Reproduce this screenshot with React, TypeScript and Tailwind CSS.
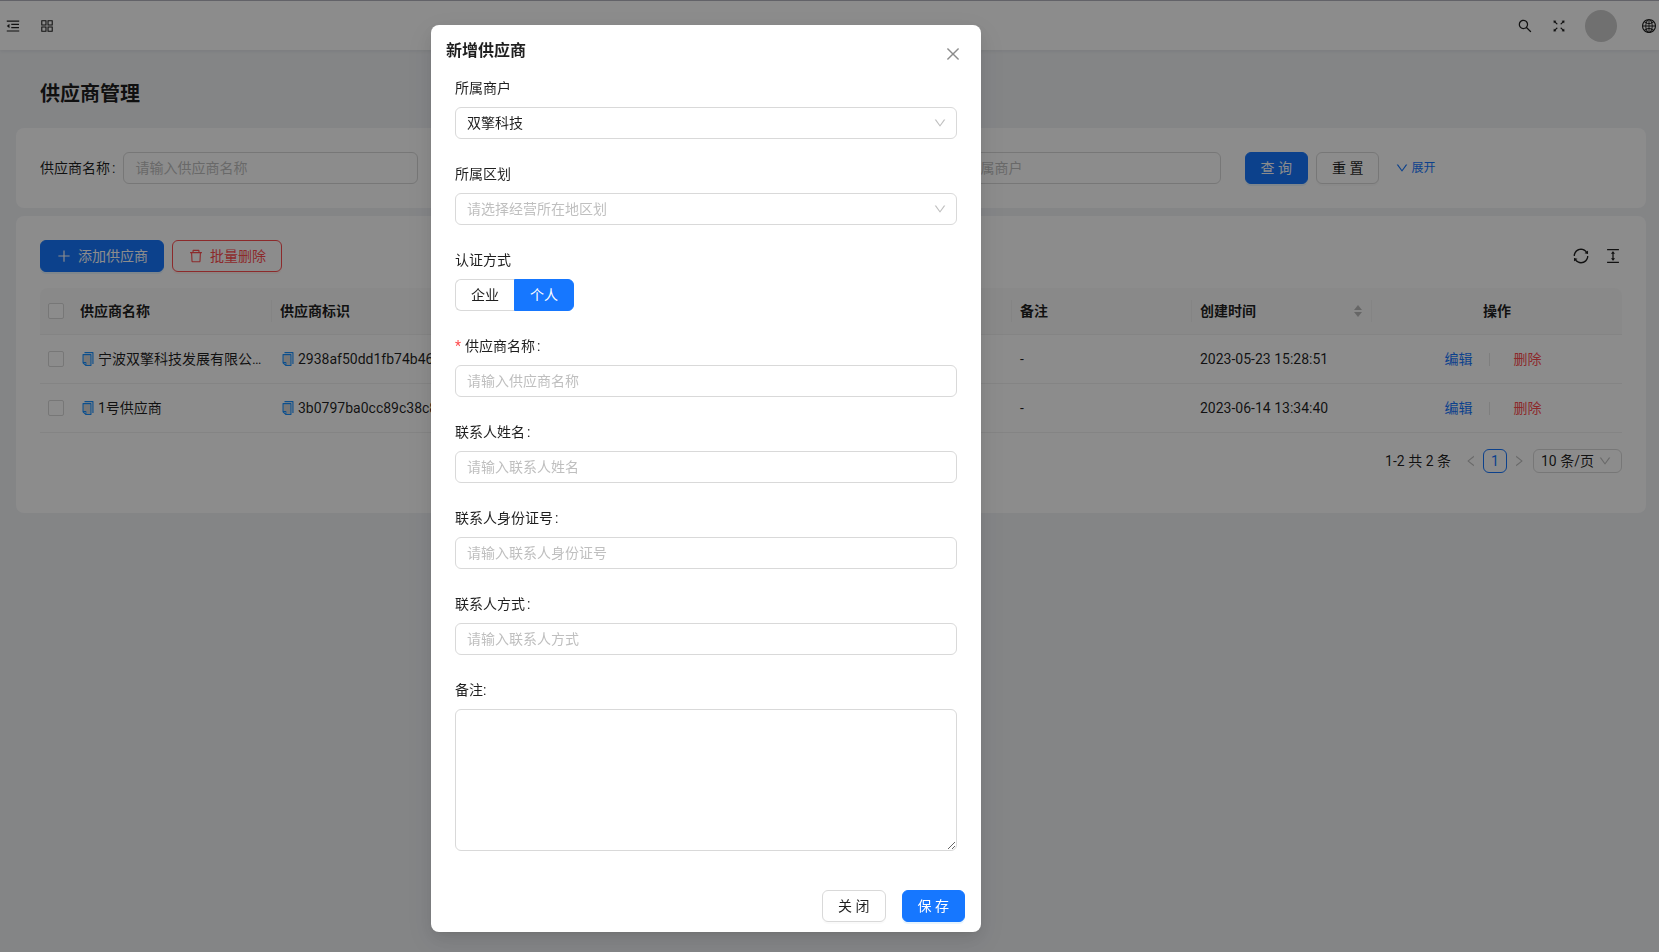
import type { ButtonHTMLAttributes, InputHTMLAttributes, ReactNode } from "react";
import {
  AiOutlineAppstore,
  AiOutlineClose,
  AiOutlineColumnHeight,
  AiOutlineDelete,
  AiOutlineDown,
  AiOutlineFullscreen,
  AiOutlineGlobal,
  AiOutlineLeft,
  AiOutlineMenuFold,
  AiOutlinePlus,
  AiOutlineRight,
  AiOutlineSearch,
  AiOutlineSync,
  AiTwotoneCopy,
} from "react-icons/ai";
import clsx from "clsx";

const suppliers = [
  { name: "宁波双擎科技发展有限公司", code: "2938af50dd1fb74b46f0c1", merchant: "双擎科技", auth: "企业", contact: "-", remark: "-", createdAt: "2023-05-23 15:28:51" },
  { name: "1号供应商", code: "3b0797ba0cc89c38c8d2a7", merchant: "双擎科技", auth: "个人", contact: "-", remark: "-", createdAt: "2023-06-14 13:34:40" },
];

const columns = [
  { title: "供应商名称", width: "w-[200px]" },
  { title: "供应商标识", width: "w-[200px]" },
  { title: "所属商户", width: "w-[180px]" },
  { title: "认证方式", width: "w-[180px]" },
  { title: "联系人", width: "w-[180px]" },
  { title: "备注", width: "w-[180px]" },
  { title: "创建时间", width: "w-[180px]", sortable: true },
];

const contactFields = [
  { id: "name", label: "供应商名称", placeholder: "请输入供应商名称", required: true },
  { id: "contact", label: "联系人姓名", placeholder: "请输入联系人姓名" },
  { id: "idCard", label: "联系人身份证号", placeholder: "请输入联系人身份证号" },
  { id: "phone", label: "联系人方式", placeholder: "请输入联系人方式" },
];

type ButtonProps = ButtonHTMLAttributes<HTMLButtonElement> & { kind?: "default" | "primary" | "danger" };

function Button({ kind = "default", className, children, ...rest }: ButtonProps) {
  return (
    <button
      type="button"
      className={clsx(
        "flex h-8 items-center justify-center gap-[6px] whitespace-nowrap rounded-md border px-[15px] text-sm",
        kind === "default" && "border-[#d9d9d9] bg-white text-black/88 shadow-[0_2px_0_rgba(0,0,0,0.02)]",
        kind === "primary" && "border-[#1677ff] bg-[#1677ff] text-white shadow-[0_2px_0_rgba(5,145,255,0.1)]",
        kind === "danger" && "border-[#ff4d4f] bg-white text-[#ff4d4f] shadow-[0_2px_0_rgba(255,38,5,0.06)]",
        className
      )}
      {...rest}
    >
      {children}
    </button>
  );
}

function Input({ className, ...rest }: InputHTMLAttributes<HTMLInputElement>) {
  return (
    <input
      className={clsx(
        "h-8 w-full min-w-0 rounded-md border border-[#d9d9d9] bg-white px-[11px] text-sm text-black/88 outline-none placeholder:text-[#bfbfbf] focus:border-[#1677ff]",
        className
      )}
      {...rest}
    />
  );
}

function Select({ id, placeholder, options }: { id: string; placeholder?: string; options: string[] }) {
  return (
    <div className="relative">
      <select
        id={id}
        defaultValue={placeholder ? "" : options[0]}
        className={clsx(
          "h-8 w-full appearance-none rounded-md border border-[#d9d9d9] bg-white px-[11px] text-sm outline-none",
          placeholder ? "text-[#bfbfbf]" : "text-black/88"
        )}
      >
        {placeholder && <option value="">{placeholder}</option>}
        {options.map((o) => (
          <option key={o}>{o}</option>
        ))}
      </select>
      <AiOutlineDown className="pointer-events-none absolute right-[10px] top-[9px] size-[14px] text-black/25" />
    </div>
  );
}

type FormItemProps = { htmlFor: string; label: string; required?: boolean; colon?: boolean; children: ReactNode };

function FormItem({ htmlFor, label, required, colon, children }: FormItemProps) {
  return (
    <div className="mb-6">
      <label htmlFor={htmlFor} className={clsx("block pb-2 leading-[22px]", colon && "after:ml-[2px] after:content-[':']")}>
        {required && <span className="mr-1 text-[#ff4d4f]">*</span>}
        {label}
      </label>
      {children}
    </div>
  );
}

function Filter({ id, label, placeholder }: { id: string; label: string; placeholder: string }) {
  return (
    <div className="flex items-center gap-2">
      <label htmlFor={id} className="shrink-0 after:ml-[2px] after:content-[':']">{label}</label>
      <Input id={id} placeholder={placeholder} />
    </div>
  );
}

function Header() {
  return (
    <header className="flex h-[50px] items-center justify-between border-t border-[#b3b3bd] bg-white pl-[5px] pr-[2px] shadow-[0_1px_4px_rgba(0,21,41,0.08)]">
      <div className="flex items-center gap-[18px]">
        <button type="button" aria-label="折叠菜单"><AiOutlineMenuFold className="size-4" /></button>
        <button type="button" aria-label="应用"><AiOutlineAppstore className="size-4" /></button>
      </div>
      <div className="flex items-center gap-[18px]">
        <button type="button" aria-label="搜索"><AiOutlineSearch className="size-4" /></button>
        <button type="button" aria-label="全屏"><AiOutlineFullscreen className="size-4" /></button>
        <span className="size-8 rounded-full bg-[#ccc]" />
        <button type="button" aria-label="语言" className="ml-[6px]"><AiOutlineGlobal className="size-4" /></button>
      </div>
    </header>
  );
}

function SupplierTable() {
  return (
    <table className="mt-4 w-full table-fixed border-separate border-spacing-0">
      <thead>
        <tr className="h-[47px]">
          <th className="w-8 rounded-tl-lg border-b border-[#f0f0f0] bg-[#fafafa] pl-2 text-left">
            <input type="checkbox" aria-label="全选" className="block size-4 appearance-none rounded-[2px] border border-[#d9d9d9] bg-white" />
          </th>
          {columns.map((col) => (
            <th key={col.title} className={clsx("border-b border-[#f0f0f0] bg-[#fafafa] text-left font-semibold", col.width)}>
              <div className="flex h-[22px] items-center justify-between border-r border-[#f0f0f0] px-2">
                {col.title}
                {col.sortable && (
                  <svg aria-hidden="true" viewBox="0 0 10 14" className="h-[14px] w-[10px] fill-black/25">
                    <path d="M5 1L9 6H1zM5 13L1 8H9z" />
                  </svg>
                )}
              </div>
            </th>
          ))}
          <th className="rounded-tr-lg border-b border-[#f0f0f0] bg-[#fafafa] text-center font-semibold">操作</th>
        </tr>
      </thead>
      <tbody>
        {suppliers.map((row) => (
          <tr key={row.code} className="h-[49px] [&>td]:border-b [&>td]:border-[#f0f0f0] [&>td]:px-2">
            <td>
              <input type="checkbox" aria-label={row.name} className="block size-4 appearance-none rounded-[2px] border border-[#d9d9d9] bg-white" />
            </td>
            {[row.name, row.code].map((text) => (
              <td key={text}>
                <div className="flex items-center gap-[2px]">
                  <button type="button" aria-label="复制" className="shrink-0"><AiTwotoneCopy className="size-4 text-[#1890ff]" /></button>
                  <span className="truncate">{text}</span>
                </div>
              </td>
            ))}
            <td>{row.merchant}</td>
            <td>{row.auth}</td>
            <td>{row.contact}</td>
            <td>{row.remark}</td>
            <td>{row.createdAt}</td>
            <td>
              <div className="flex items-center justify-center">
                <a href="#edit" className="px-4 text-[#1677ff]">编辑</a>
                <span className="h-[13px] w-px bg-[#e6e6e6]" />
                <a href="#delete" className="px-6 text-[#ff4d4f]">删除</a>
              </div>
            </td>
          </tr>
        ))}
      </tbody>
    </table>
  );
}

function Pagination() {
  return (
    <nav className="mt-4 flex items-center justify-end" aria-label="分页">
      <span className="mr-2">1-2 共 2 条</span>
      <button type="button" aria-label="上一页" className="flex size-6 items-center justify-center text-black/25"><AiOutlineLeft className="size-[14px]" /></button>
      <button type="button" className="flex size-6 items-center justify-center rounded-md border border-[#1677ff] text-[#1677ff]">1</button>
      <button type="button" aria-label="下一页" className="flex size-6 items-center justify-center text-black/25"><AiOutlineRight className="size-[14px]" /></button>
      <div className="relative ml-[2px]">
        <select aria-label="每页条数" className="block h-6 w-[89px] appearance-none rounded-md border border-[#d9d9d9] bg-white px-[7px] text-sm">
          <option>10 条/页</option>
        </select>
        <AiOutlineDown className="pointer-events-none absolute right-[10px] top-[5px] size-[14px] text-black/25" />
      </div>
    </nav>
  );
}

function SupplierModal() {
  return (
    <div className="fixed inset-0 flex items-start justify-center overflow-hidden bg-black/45 pr-[247px] pt-[25px]">
      <form
        role="dialog"
        aria-labelledby="modal-title"
        className="w-[550px] rounded-lg bg-white pb-[10px] shadow-[0_6px_16px_0_rgba(0,0,0,0.08),0_3px_6px_-4px_rgba(0,0,0,0.12),0_9px_28px_8px_rgba(0,0,0,0.05)]"
      >
        <div className="flex items-end justify-between py-[14px] pl-[15px] pr-[19px]">
          <h2 id="modal-title" className="text-base font-semibold leading-6">新增供应商</h2>
          <button type="button" aria-label="关闭" className="text-black/45"><AiOutlineClose className="block size-[18px]" /></button>
        </div>

        <div className="px-6">
          <FormItem htmlFor="merchant" label="所属商户">
            <Select id="merchant" options={["双擎科技"]} />
          </FormItem>
          <FormItem htmlFor="region" label="所属区划">
            <Select id="region" placeholder="请选择经营所在地区划" options={[]} />
          </FormItem>
          <fieldset className="mb-6">
            <legend className="pb-2 leading-[22px]">认证方式</legend>
            <div className="flex h-8 leading-[30px]">
              <label className="relative rounded-l-md border border-r-0 border-[#d9d9d9] px-[15px]">
                <input type="radio" name="auth" className="absolute inset-0 appearance-none" />企业
              </label>
              <label className="relative rounded-r-md border border-[#1677ff] bg-[#1677ff] px-[15px] text-white">
                <input type="radio" name="auth" defaultChecked className="absolute inset-0 appearance-none" />个人
              </label>
            </div>
          </fieldset>
          {contactFields.map((f) => (
            <FormItem key={f.id} htmlFor={f.id} label={f.label} required={f.required} colon>
              <Input id={f.id} placeholder={f.placeholder} />
            </FormItem>
          ))}
          <FormItem htmlFor="remark" label="备注:">
            <textarea id="remark" className="block h-[142px] w-full resize-y rounded-md border border-[#d9d9d9] px-[11px] py-1 text-sm outline-none" />
          </FormItem>
        </div>

        <div className="flex justify-end gap-4 px-4 pt-[15px]">
          <Button>关 闭</Button>
          <Button kind="primary">保 存</Button>
        </div>
      </form>
    </div>
  );
}

export default function App() {
  return (
    <div className="min-h-screen bg-[#f0f2f5] font-['Roboto','Noto_Sans_CJK_SC',sans-serif] text-sm leading-[22px] text-black/88">
      <Header />
      <main className="pb-6 pl-4 pr-[13px]">
        <h1 className="px-6 pb-[18px] pt-7 text-xl font-semibold leading-8">供应商管理</h1>

        <section className="grid grid-cols-4 gap-6 rounded-lg bg-white p-6">
          <Filter id="q-name" label="供应商名称" placeholder="请输入供应商名称" />
          <Filter id="q-code" label="供应商标识" placeholder="请输入供应商标识" />
          <Filter id="q-merchant" label="所属商户" placeholder="请输入所属商户" />
          <div className="flex items-center gap-2">
            <Button kind="primary">查 询</Button>
            <Button>重 置</Button>
            <a href="#expand" className="ml-2 flex items-center gap-[2px] text-xs text-[#1677ff]">
              <AiOutlineDown className="size-[14px]" />
              展开
            </a>
          </div>
        </section>

        <section className="mt-2 rounded-lg bg-white px-6 pb-10 pt-6">
          <div className="flex items-center justify-between">
            <div className="flex gap-2">
              <Button kind="primary"><AiOutlinePlus className="size-4" />添加供应商</Button>
              <Button kind="danger"><AiOutlineDelete className="size-4" />批量删除</Button>
            </div>
            <div className="flex gap-[14px]">
              <button type="button" aria-label="刷新"><AiOutlineSync className="size-[18px]" /></button>
              <button type="button" aria-label="密度"><AiOutlineColumnHeight className="size-[18px]" /></button>
            </div>
          </div>
          <SupplierTable />
          <Pagination />
        </section>
      </main>
      <SupplierModal />
    </div>
  );
}
